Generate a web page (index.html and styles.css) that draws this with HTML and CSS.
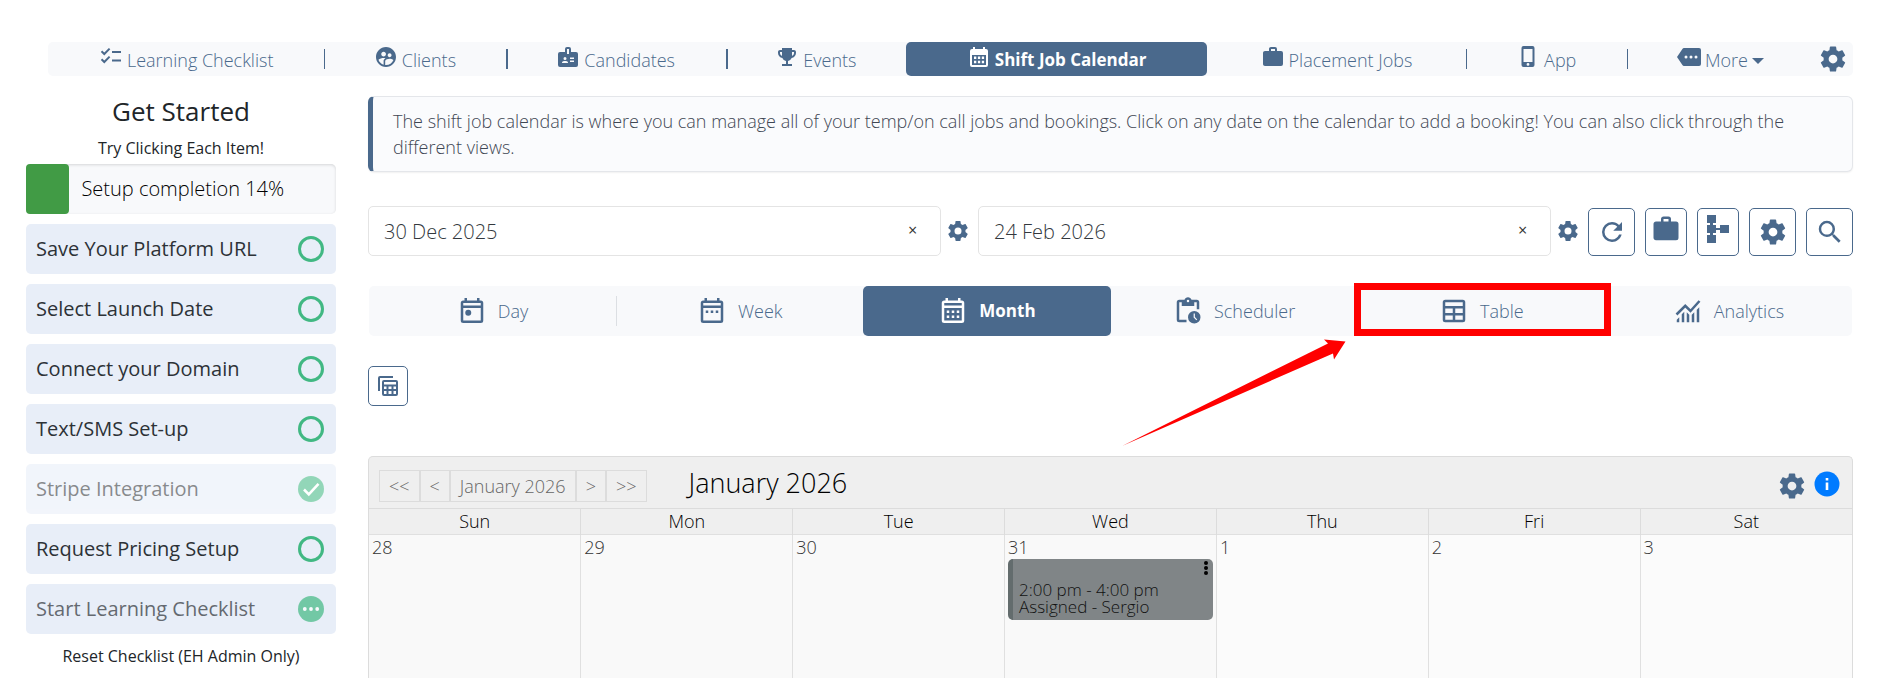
FILE: index.html
```html
<!DOCTYPE html>
<html lang="en">
<head>
<meta charset="utf-8">
<title>Shift Job Calendar</title>
<link rel="stylesheet" href="styles.css">
</head>
<body>
<svg class="defs" aria-hidden="true">
  <symbol id="i-cog" viewBox="0 0 24 24"><path d="M12,15.5A3.5,3.5 0 0,1 8.5,12A3.5,3.5 0 0,1 12,8.5A3.5,3.5 0 0,1 15.5,12A3.5,3.5 0 0,1 12,15.5M19.43,12.97C19.47,12.65 19.5,12.33 19.5,12C19.5,11.67 19.47,11.34 19.43,11L21.54,9.37C21.73,9.22 21.78,8.95 21.66,8.73L19.66,5.27C19.54,5.05 19.27,4.96 19.05,5.05L16.56,6.05C16.04,5.66 15.5,5.32 14.87,5.07L14.5,2.42C14.46,2.18 14.25,2 14,2H10C9.75,2 9.54,2.18 9.5,2.42L9.13,5.07C8.5,5.32 7.96,5.66 7.44,6.05L4.95,5.05C4.73,4.96 4.46,5.05 4.34,5.27L2.34,8.73C2.21,8.95 2.27,9.22 2.46,9.37L4.57,11C4.53,11.34 4.5,11.67 4.5,12C4.5,12.33 4.53,12.65 4.57,12.97L2.46,14.63C2.27,14.78 2.21,15.05 2.34,15.27L4.34,18.73C4.46,18.95 4.73,19.03 4.95,18.95L7.44,17.94C7.96,18.34 8.5,18.68 9.13,18.93L9.5,21.58C9.54,21.82 9.75,22 10,22H14C14.25,22 14.46,21.82 14.5,21.58L14.87,18.93C15.5,18.67 16.04,18.34 16.56,17.94L19.05,18.95C19.27,19.03 19.54,18.95 19.66,18.73L21.66,15.27C21.78,15.05 21.73,14.78 21.54,14.63L19.43,12.97Z"/></symbol>
  <symbol id="i-briefcase" viewBox="0 0 24 24"><path fill-rule="evenodd" d="M10,2H14A2,2 0 0,1 16,4V6H20A2,2 0 0,1 22,8V19A2,2 0 0,1 20,21H4C2.89,21 2,20.1 2,19V8C2,6.89 2.89,6 4,6H8V4C8,2.89 8.89,2 10,2M14,6V4H10V6H14Z"/></symbol>
</svg>

<nav class="topnav" aria-label="Main">
  <a class="nav-item w-276" href="#"><svg class="icon" viewBox="0 0 24 24"><path fill="none" stroke="currentColor" stroke-width="2" d="M2.5,6.2L5.3,9L10.6,3.6M2.5,14.2L5.3,17L10.6,11.6M13,7H22M13,15.5H22"/></svg>Learning Checklist</a>
  <a class="nav-item ruled w-181" href="#"><svg class="icon" viewBox="0 0 24 24"><path d="M11.99 2c-5.52 0-10 4.48-10 10s4.48 10 10 10 10-4.48 10-10-4.48-10-10-10zm3.61 6.34c1.07 0 1.93.86 1.93 1.93 0 1.07-.86 1.93-1.93 1.93-1.07 0-1.93-.86-1.93-1.93-.01-1.07.86-1.93 1.93-1.93zm-6-1.58c1.3 0 2.36 1.06 2.36 2.36 0 1.3-1.06 2.36-2.36 2.36s-2.36-1.06-2.36-2.36c0-1.31 1.05-2.36 2.36-2.36zm0 9.13v3.75c-2.4-.75-4.3-2.6-5.14-4.96 1.05-1.12 3.67-1.69 5.14-1.69.53 0 1.2.08 1.9.22-1.64.87-1.9 2.02-1.9 2.68zM11.99 20c-.27 0-.53-.01-.79-.04v-4.07c0-1.42 2.94-2.13 4.4-2.13 1.07 0 2.92.39 3.84 1.15-1.17 2.97-4.06 5.09-7.45 5.09z"/></svg>Clients</a>
  <a class="nav-item ruled thick w-220" href="#"><svg class="icon" viewBox="0 0 24 24"><path fill-rule="evenodd" d="M20,7H15V4A2,2 0 0,0 13,2H11A2,2 0 0,0 9,4V7H4A2,2 0 0,0 2,9V20A2,2 0 0,0 4,22H20A2,2 0 0,0 22,20V9A2,2 0 0,0 20,7ZM11,4H13V9H11ZM9,12A1.5,1.5 0 1,1 9,15A1.5,1.5 0 1,1 9,12ZM6,18V17.4C6,16.4 8,16 9,16S12,16.4 12,17.4V18ZM14,12.5H18V14H14ZM14,15.5H18V17H14Z"/></svg>Candidates</a>
  <a class="nav-item ruled thick w-180" href="#"><svg class="icon" viewBox="0 0 24 24"><path d="M19 5h-2V3H7v2H5c-1.1 0-2 .9-2 2v1c0 2.55 1.92 4.63 4.39 4.94.63 1.5 1.98 2.63 3.61 2.96V19H7v2h10v-2h-4v-3.1c1.63-.33 2.98-1.46 3.61-2.96C19.08 12.63 21 10.55 21 8V7c0-1.1-.9-2-2-2zM5 8V7h2v3.82C5.84 10.4 5 9.3 5 8zm14 0c0 1.3-.84 2.4-2 2.82V7h2v1z"/></svg>Events</a>
  <a class="nav-item active w-301" href="#" aria-current="page"><svg class="icon" viewBox="0 0 24 24"><path fill-rule="evenodd" d="M19,4H18V2H16V4H8V2H6V4H5A2,2 0 0,0 3,6V20A2,2 0 0,0 5,22H19A2,2 0 0,0 21,20V6A2,2 0 0,0 19,4ZM5,10H19V20H5ZM7,11.5H9.3V14H7ZM10.9,11.5H13.2V14H10.9ZM14.8,11.5H17.1V14H14.8ZM7,15.8H9.3V18.3H7ZM10.9,15.8H13.2V18.3H10.9ZM14.8,15.8H17.1V18.3H14.8Z"/></svg>Shift Job Calendar</a>
  <a class="nav-item w-258" href="#"><svg class="icon"><use href="#i-briefcase"/></svg>Placement Jobs</a>
  <a class="nav-item ruled w-161" href="#"><svg class="icon" viewBox="0 0 24 24"><path fill-rule="evenodd" d="M7.5,1H16.5A2,2 0 0,1 18.500,3V20A2,2 0 0,1 16.500,22H7.500A2,2 0 0,1 5.500,20V3A2,2 0 0,1 7.500,1ZM7.500,4H16.500V17H7.500ZM12,18A1.400,1.400 0 1,0 12,20.800A1.400,1.400 0 1,0 12,18Z"/></svg>App</a>
  <a class="nav-item ruled w-187" href="#"><svg class="icon" viewBox="0 0 24 24"><path fill-rule="evenodd" d="M22,3H7C6.300,3 5.800,3.400 5.400,3.900L0,12L5.400,20.100C5.800,20.600 6.300,21 7,21H22A2,2 0 0,0 24,19V5A2,2 0 0,0 22,3ZM9,10.500A1.500,1.500 0 1,1 9,13.500A1.500,1.500 0 1,1 9,10.500ZM14,10.500A1.500,1.500 0 1,1 14,13.500A1.500,1.500 0 1,1 14,10.500ZM19,10.500A1.500,1.500 0 1,1 19,13.500A1.500,1.500 0 1,1 19,10.500Z"/></svg>More<svg class="caret" viewBox="0 0 12 6"><path d="M0,0H12L6,6Z"/></svg></a>
  <button class="plain nav-cog" aria-label="Settings"><svg class="icon lg"><use href="#i-cog"/></svg></button>
</nav>

<div class="layout">
  <aside class="sidebar">
    <h2 class="side-title">Get Started</h2>
    <p class="side-note">Try Clicking Each Item!</p>
    <div class="progress"><div class="bar" style="width:14%"></div><span class="progress-text">Setup completion 14%</span></div>
    <ul class="steps">
      <li><button class="step">Save Your Platform URL<span class="ring"></span></button></li>
      <li><button class="step">Select Launch Date<span class="ring"></span></button></li>
      <li><button class="step">Connect your Domain<span class="ring"></span></button></li>
      <li><button class="step">Text/SMS Set-up<span class="ring"></span></button></li>
      <li><button class="step done">Stripe Integration<svg class="state" viewBox="0 0 26 26"><circle cx="13" cy="13" r="13" fill="#41b883"/><path fill="none" stroke="#fff" stroke-width="2.600" d="M6,13.500L10.800,18.300L20.500,7.800"/></svg></button></li>
      <li><button class="step">Request Pricing Setup<span class="ring"></span></button></li>
      <li><button class="step started"><span>Start Learning Checklist</span><svg class="state" viewBox="0 0 26 26"><circle cx="13" cy="13" r="13" fill="#41b883"/><g fill="#fff"><circle cx="6.800" cy="13" r="1.900"/><circle cx="13" cy="13" r="1.900"/><circle cx="19.200" cy="13" r="1.900"/></g></svg></button></li>
    </ul>
    <button class="plain reset">Reset Checklist (EH Admin Only)</button>
  </aside>

  <main class="main">
    <p class="info">The shift job calendar is where you can manage all of your temp/on call jobs and bookings. Click on any date on the calendar to add a booking! You can also click through the different views.</p>

    <div class="filters">
      <div class="date"><input type="text" value="30 Dec 2025" aria-label="Start date"><button class="plain clear" aria-label="Clear start date">×</button></div>
      <button class="plain date-cog" aria-label="Start date settings"><svg class="icon"><use href="#i-cog"/></svg></button>
      <div class="date"><input type="text" value="24 Feb 2026" aria-label="End date"><button class="plain clear" aria-label="Clear end date">×</button></div>
      <button class="plain date-cog" aria-label="End date settings"><svg class="icon"><use href="#i-cog"/></svg></button>
      <div class="tools">
        <button class="tool wide" aria-label="Refresh"><svg class="icon lg" viewBox="0 0 24 24"><path d="M17.650,6.350C16.200,4.900 14.210,4 12,4A8,8 0 0,0 4,12A8,8 0 0,0 12,20C15.730,20 18.840,17.450 19.730,14H17.650C16.830,16.330 14.610,18 12,18A6,6 0 0,1 6,12A6,6 0 0,1 12,6C13.660,6 15.140,6.690 16.220,7.780L13,11H20V4L17.650,6.350Z"/></svg></button>
        <button class="tool top" aria-label="Jobs"><svg class="icon lg"><use href="#i-briefcase"/></svg></button>
        <button class="tool top" aria-label="Hierarchy"><svg class="icon lg" viewBox="0 0 30 30"><path d="M4,1H13V9H10V11H13V14H17V11H26V19H17V16H13V19H10V21H13V29H4V21H7V19H4V11H7V9H4Z"/></svg></button>
        <button class="tool wide" aria-label="Settings"><svg class="icon lg"><use href="#i-cog"/></svg></button>
        <button class="tool wide" aria-label="Search"><svg class="icon lg" viewBox="0 0 24 24"><path fill-rule="evenodd" d="M9.500,3A6.500,6.500 0 0,1 16,9.500C16,11.110 15.410,12.590 14.440,13.730L14.710,14H15.500L20.500,19L19,20.500L14,15.500V14.710L13.730,14.440C12.590,15.410 11.110,16 9.500,16A6.500,6.500 0 0,1 3,9.500A6.500,6.500 0 0,1 9.500,3M9.500,5C7,5 5,7 5,9.500C5,12 7,14 9.500,14C12,14 14,12 14,9.500C14,7 12,5 9.500,5Z"/></svg></button>
      </div>
    </div>

    <div class="tabs">
      <button class="tab"><svg class="icon lg" viewBox="0 0 24 24"><path fill-rule="evenodd" d="M19,3.500H18V1.500H16V3.500H8V1.500H6V3.500H5A2,2 0 0,0 3,5.500V19.500A2,2 0 0,0 5,21.500H19A2,2 0 0,0 21,19.500V5.500A2,2 0 0,0 19,3.500ZM5,5.500H19V7.500H5ZM5,9.500H19V19.500H5ZM9,11A2.400,2.400 0 1,1 9,15.800A2.400,2.400 0 1,1 9,11Z"/></svg>Day</button>
      <button class="tab divided"><svg class="icon lg" viewBox="0 0 24 24"><path fill-rule="evenodd" d="M19,3.500H18V1.500H16V3.500H8V1.500H6V3.500H5A2,2 0 0,0 3,5.500V19.500A2,2 0 0,0 5,21.500H19A2,2 0 0,0 21,19.500V5.500A2,2 0 0,0 19,3.500ZM5,5.500H19V7.500H5ZM5,9.500H19V19.500H5ZM7,11.500H9V13.500H7ZM11,11.500H13V13.500H11ZM15,11.500H17V13.500H15Z"/></svg>Week</button>
      <button class="tab active"><svg class="icon lg" viewBox="0 0 24 24"><path fill-rule="evenodd" d="M19,3.500H18V1.500H16V3.500H8V1.500H6V3.500H5A2,2 0 0,0 3,5.500V19.500A2,2 0 0,0 5,21.500H19A2,2 0 0,0 21,19.500V5.500A2,2 0 0,0 19,3.500ZM5,5.500H19V7.500H5ZM5,9.500H19V19.500H5ZM7,11.500H9V13.500H7ZM11,11.500H13V13.500H11ZM15,11.500H17V13.500H15ZM7,15.500H9V17.500H7ZM11,15.500H13V17.500H11ZM15,15.500H17V17.500H15Z"/></svg>Month</button>
      <button class="tab"><svg class="icon lg" viewBox="0 0 24 24"><path fill-rule="evenodd" d="M19,3H14.800C14.400,1.800 13.300,1 12,1S9.600,1.800 9.200,3H5A2,2 0 0,0 3,5V19A2,2 0 0,0 5,21H10.800V19H5V5H7V8H17V5H19V10.500H21V5A2,2 0 0,0 19,3ZM12,5A1,1 0 1,1 12,3A1,1 0 1,1 12,5ZM17,12A5,5 0 1,0 17,22A5,5 0 1,0 17,12ZM16.500,14H17.500V16.800L19.400,18.700L18.700,19.400L16.500,17.200Z"/></svg>Scheduler</button>
      <div class="tab-spot">
        <button class="tab"><svg class="icon lg" viewBox="0 0 24 24"><path fill-rule="evenodd" d="M5,3H19A2,2 0 0,1 21,5V19A2,2 0 0,1 19,21H5A2,2 0 0,1 3,19V5A2,2 0 0,1 5,3ZM5,5V8H19V5ZM5,10V13.500H11V10ZM13,10V13.500H19V10ZM5,15.500V19H11V15.500ZM13,15.500V19H19V15.500Z"/></svg>Table</button>
        <span class="mark-box"></span>
        <svg class="mark-arrow" viewBox="0 0 224 108"><path fill="#f00" d="M0,107L206,4.500L202,0.500L223.500,2.500L212,20.500L211,14.500Z"/></svg>
      </div>
      <button class="tab"><svg class="icon lg" viewBox="0 0 24 24"><path d="M3,19L5,17V21H3ZM7,14.500L9,12.500V21H7ZM11,13L13,15V21H11ZM15,15L17,13V21H15ZM19,11L21,9V21H19Z"/><path fill="none" stroke="currentColor" stroke-width="2" d="M2.800,14.800L9.800,7.800L14,12L21.200,4"/></svg>Analytics</button>
    </div>

    <button class="tool copy" aria-label="Copy table"><svg class="icon" viewBox="0 0 24 24"><path fill-rule="evenodd" d="M4,2H17V4H4V17H2V4A2,2 0 0,1 4,2ZM8,6H20A2,2 0 0,1 22,8V20A2,2 0 0,1 20,22H8A2,2 0 0,1 6,20V8A2,2 0 0,1 8,6ZM8,8V10.500H20V8ZM8,12.500V15H10.500V12.500ZM12.500,12.500V15H15.500V12.500ZM17.500,12.500V15H20V12.500ZM8,17V20H10.500V17ZM12.500,17V20H15.500V17ZM17.500,17V20H20V17Z"/></svg></button>

    <section class="calendar">
      <header class="cal-head">
        <div class="pager">
          <button>&lt;&lt;</button><button>&lt;</button><button>January 2026</button><button>&gt;</button><button>&gt;&gt;</button>
        </div>
        <h2 class="cal-title">January 2026</h2>
        <button class="plain" aria-label="Calendar settings"><svg class="icon lg"><use href="#i-cog"/></svg></button>
        <button class="plain help" aria-label="Calendar help"><svg class="icon lg" viewBox="0 0 30 30"><circle cx="15" cy="13" r="12.500" fill="#007bff"/><path fill="#fff" d="M13.700,7H16.300V9.500H13.700ZM13.700,11.500H16.300V19H13.700Z"/></svg></button>
      </header>
      <table class="grid">
        <thead><tr><th>Sun</th><th>Mon</th><th>Tue</th><th>Wed</th><th>Thu</th><th>Fri</th><th>Sat</th></tr></thead>
        <tbody><tr>
          <td class="other">28</td><td class="other">29</td><td class="other">30</td>
          <td class="other">31
            <div class="event"><button class="plain dots" aria-label="Booking menu"><svg width="6" height="16" viewBox="0 0 6 16"><circle cx="3" cy="4" r="2"/><circle cx="3" cy="9" r="2"/><circle cx="3" cy="14" r="2"/></svg></button>2:00 pm - 4:00 pm<br>Assigned - Sergio</div>
          </td>
          <td>1</td><td>2</td><td>3</td>
        </tr></tbody>
      </table>
    </section>
  </main>
</div>
</body>
</html>
```
FILE: styles.css
```css
*, *::before, *::after { box-sizing: border-box; }

:root {
  --blue: #4a698c;
  --soft: #f8f9fb;
  --line: #dcdcdc;
}

body {
  margin: 0;
  height: 100vh;
  padding: 42px 47px 0 26px;
  display: flex;
  flex-direction: column;
  gap: 20px;
  overflow: hidden;
  background: #fff;
  color: #212529;
  font: 300 18px/20px "Open Sans", Lato, sans-serif;
}

.defs { display: none; }
h2, p, ul { margin: 0; padding: 0; font-weight: 400; }
button, input { font: inherit; color: inherit; }
button { cursor: pointer; }
.plain { display: flex; padding: 0; border: 0; background: none; }
.icon { width: 24px; height: 24px; flex: none; fill: currentColor; }
.icon.lg { width: 30px; height: 30px; }

/* Top navigation */
.topnav {
  display: flex;
  margin-left: 22px;
  height: 34px;
  border-radius: 5px;
  background: var(--soft);
  color: var(--blue);
}
.nav-item {
  position: relative;
  display: flex;
  align-items: center;
  justify-content: center;
  gap: 4px;
  color: inherit;
  text-decoration: none;
  white-space: nowrap;
  padding-top: 2px;
}
.nav-item .icon { margin-bottom: 6px; }
.nav-item.active { background: var(--blue); color: #fff; border-radius: 5px; font-weight: 700; }
.ruled::before {
  content: "";
  position: absolute;
  left: 0;
  top: 7px;
  width: 1px;
  height: 20px;
  background: var(--blue);
}
.thick::before { width: 2px; }
.caret { width: 12px; height: 6px; fill: currentColor; margin-top: 2px; }
.w-276 { flex: 276 1 0; }
.w-181 { flex: 181 1 0; }
.w-220 { flex: 220 1 0; }
.w-180 { flex: 180 1 0; }
.w-301 { flex: 301 1 0; }
.w-258 { flex: 258 1 0; }
.w-161 { flex: 161 1 0; }
.w-187 { flex: 187 1 0; }
.nav-cog { color: inherit; padding: 2px 5px 0 4px; }

.layout { flex: 1; min-height: 0; display: flex; gap: 32px; }

/* Checklist sidebar */
.sidebar { flex: 0 0 310px; display: flex; flex-direction: column; text-align: center; }
.side-title { font-size: 26px; line-height: 30px; }
.side-note { font-size: 16px; line-height: 20px; margin: 12px 0 6px; }
.progress {
  display: flex;
  height: 50px;
  border-radius: 5px;
  background: var(--soft);
  box-shadow: inset 0 1px 3px rgba(0, 0, 0, .14);
  font-size: 20px;
  line-height: 50px;
  color: #000;
}
.bar { background: #419b45; border-radius: 4px; }
.progress-text { padding-left: 12px; }
.steps { list-style: none; display: grid; gap: 10px; margin-top: 10px; }
.step {
  display: flex;
  align-items: center;
  justify-content: space-between;
  width: 100%;
  height: 50px;
  padding: 0 12px 0 10px;
  border: 0;
  border-radius: 5px;
  background: #e8eef8;
  color: #2d3237;
  font-size: 20px;
}
.ring { width: 26px; height: 26px; border: 3px solid #41b883; border-radius: 50%; }
.state { width: 26px; height: 26px; }
.done { opacity: .57; }
.started > * { opacity: .7; }
.reset { justify-content: center; font-size: 16px; font-weight: 400; margin-top: 12px; }

/* Main column */
.main { flex: 1; min-width: 0; display: flex; flex-direction: column; }
.info {
  padding: 11px 40px 11px 20px;
  border: 1px solid #e4e6ea;
  border-left: 5px solid var(--blue);
  border-radius: 6px;
  background: #fafbfd;
  box-shadow: 0 1px 2px rgba(0, 0, 0, .06);
  font-weight: 300;
  line-height: 26px;
  color: #3f4754;
}
.filters { display: flex; align-items: center; height: 50px; margin-top: 34px; color: var(--blue); }
.date { position: relative; flex: 1; height: 50px; }
.date input {
  width: 100%;
  height: 100%;
  padding: 0 40px 0 15px;
  border: 1px solid #e4e4e4;
  border-radius: 5px;
  background: #fff;
  color: #33383d;
  font-size: 20px;
}
.clear { position: absolute; right: 24px; top: 14px; font-size: 16px; font-style: italic; font-weight: 400; color: #333; }
.date-cog { width: 37px; justify-content: center; color: inherit; padding-right: 4px; }
.tools { display: flex; gap: 10px; align-self: flex-end; }
.tool {
  display: flex;
  align-items: center;
  justify-content: center;
  width: 42px;
  height: 48px;
  padding: 0;
  border: 1px solid var(--blue);
  border-radius: 5px;
  background: #fff;
  color: var(--blue);
}
.tool.wide { width: 47px; }
.tool.top { padding-bottom: 6px; }
.tool.copy { flex: none; width: 40px; height: 40px; margin-top: 30px; }

.tabs { display: flex; height: 50px; margin: 30px 1px 0; border-radius: 5px; background: var(--soft); }
.tab {
  position: relative;
  flex: 1 1 0;
  display: flex;
  align-items: center;
  justify-content: center;
  gap: 11px;
  padding: 0;
  border: 0;
  border-radius: 5px;
  background: none;
  color: var(--blue);
}
.tab.active { background: var(--blue); color: #fff; font-weight: 700; }
.nav-item.active, .tab.active { font-size: 17px; }
.divided::before {
  content: "";
  position: absolute;
  left: 0;
  top: 10px;
  width: 1px;
  height: 30px;
  background: #dcdfe3;
}
.tab-spot { position: relative; flex: 1 1 0; display: flex; }
.mark-box { position: absolute; inset: -3px -6px 0 -4px; border: 7px solid #f00; pointer-events: none; }
.mark-arrow { position: absolute; left: -236px; top: 53px; width: 224px; height: 108px; pointer-events: none; }

/* Month calendar */
.calendar {
  flex: 1;
  min-height: 0;
  display: flex;
  flex-direction: column;
  margin-top: 50px;
  border: 1px solid var(--line);
  border-bottom: 0;
  border-radius: 5px 5px 0 0;
  background: #efefef;
}
.cal-head { display: flex; align-items: center; height: 51px; padding: 6px 10px 0 10px; color: var(--blue); }
.cal-head .plain { color: inherit; }
.help { margin-left: 5px; }
.pager { display: flex; color: #666; }
.pager button { height: 32px; padding: 0 9px; border: 1px solid var(--line); background: none; }
.cal-title { flex: 1; padding: 0 0 6px 42px; font-size: 27px; font-weight: 300; line-height: 30px; color: #000; }
.grid { flex: 1; width: 100%; border-collapse: collapse; table-layout: fixed; }
.grid th {
  height: 26px;
  padding: 0 0 2px;
  border: solid var(--line);
  border-width: 1px 1px 0;
  font-weight: 300;
  line-height: 22px;
  color: #000;
}
.grid td {
  padding: 2px 3px;
  border: 1px solid #e0e0e0;
  background: #fbfbfb;
  vertical-align: top;
  color: #333;
}
.grid td.other { background: #f9f9f9; }
.grid tr > :first-child { border-left: 0; }
.grid tr > :last-child { border-right: 0; }
.grid td { border-bottom: 0; }
.event {
  position: relative;
  margin-top: 2px;
  padding: 22px 6px 5px 6px;
  border-left: 5px solid #636c6d;
  border-radius: 5px;
  background: #808587;
  color: #111;
  font-size: 17px;
  line-height: 17px;
}
.dots { position: absolute; right: 4px; top: 0; }
```
